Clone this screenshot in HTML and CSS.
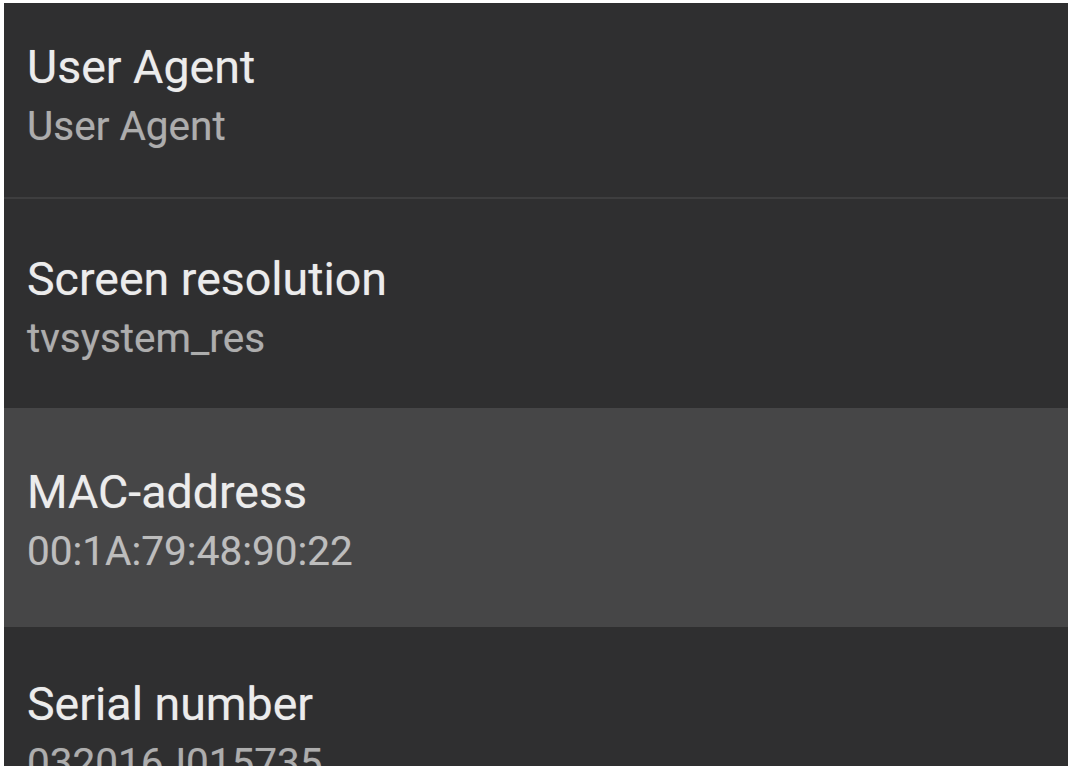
FILE: index.html
```html
<!DOCTYPE html>
<html>
<head>
<meta charset="utf-8">
<link rel="stylesheet" href="styles.css">
</head>
<body>
<div class="panel">
  <div class="row row-agent">
    <div class="title">User Agent</div>
    <div class="value">User Agent</div>
  </div>
  <div class="row row-res">
    <div class="title">Screen resolution</div>
    <div class="value">tvsystem_res</div>
  </div>
  <div class="row row-mac selected">
    <div class="title">MAC-address</div>
    <div class="value">00:1A:79:48:90:22</div>
  </div>
  <div class="row row-serial">
    <div class="title">Serial number</div>
    <div class="value">032016J015735</div>
  </div>
</div>
</body>
</html>
```
FILE: styles.css
```css
html, body {
  margin: 0;
  padding: 0;
  background: #ffffff;
}
body {
  font-family: Roboto, "Liberation Sans", sans-serif;
}
.panel {
  margin: 3px 0 0 4px;
  width: 1064px;
  height: 763px;
  background: #2f2f30;
  overflow: hidden;
  display: flex;
  flex-direction: column;
}
.row {
  box-sizing: border-box;
  padding-left: 23px;
  flex: none;
}
.title {
  font-size: 46.5px;
  line-height: 60px;
  color: #ececec;
  text-shadow: 0 0 1px rgba(236, 236, 236, 0.5);
}
.value {
  font-size: 40.5px;
  line-height: 52px;
  margin-top: 3px;
  color: #adadad;
  text-shadow: 0 0 1px rgba(173, 173, 173, 0.5);
}
.row-agent {
  height: 196px;
  padding-top: 34px;
  border-bottom: 2px solid #3e3e3f;
}
.row-res {
  height: 209px;
  padding-top: 50px;
}
.row-mac {
  height: 219px;
  padding-top: 54px;
}
.row-serial {
  padding-top: 47px;
}
.selected {
  background: #464647;
}
.selected .value {
  color: #bdbdbd;
}
```
